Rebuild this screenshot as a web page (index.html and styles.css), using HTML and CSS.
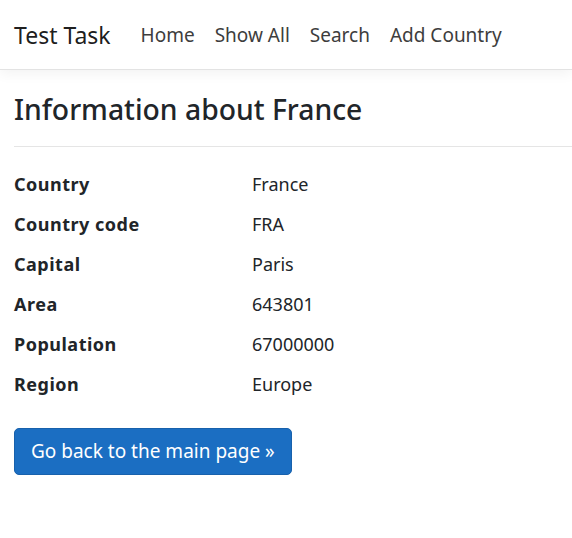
FILE: index.html
```html
<!DOCTYPE html>
<html lang="en">
<head>
<meta charset="utf-8">
<title>Information about France</title>
<link rel="stylesheet" href="styles.css">
</head>
<body>
<header class="navbar">
  <a class="brand" href="#">Test Task</a>
  <nav class="nav">
    <a class="nav-link" href="#">Home</a>
    <a class="nav-link" href="#">Show All</a>
    <a class="nav-link" href="#">Search</a>
    <a class="nav-link" href="#">Add Country</a>
  </nav>
</header>
<main class="content">
  <h2 class="title">Information about France</h2>
  <hr class="divider">
  <dl class="details">
    <dt>Country</dt><dd>France</dd>
    <dt>Country code</dt><dd>FRA</dd>
    <dt>Capital</dt><dd>Paris</dd>
    <dt>Area</dt><dd>643801</dd>
    <dt>Population</dt><dd>67000000</dd>
    <dt>Region</dt><dd>Europe</dd>
  </dl>
  <a class="btn" href="#">Go back to the main page &raquo;</a>
</main>
</body>
</html>
```

FILE: styles.css
```css
html, body {
  margin: 0;
  padding: 0;
  background: #fff;
}
body {
  font-family: "Noto Sans", "Open Sans", sans-serif;
  color: #212529;
  font-size: 18px;
}
a { text-decoration: none; }

.navbar {
  height: 70px;
  box-sizing: border-box;
  display: flex;
  align-items: center;
  padding: 1px 14px 0;
  border-bottom: 1px solid #e3e3e3;
  box-shadow: 0 4px 12px rgba(0, 0, 0, 0.05);
}
.brand {
  font-size: 23px;
  color: rgba(0, 0, 0, 0.9);
  margin-right: 20px;
}
.nav {
  display: flex;
}
.nav-link {
  color: #3d3d3d;
  font-size: 19px;
  padding: 0 10px;
}

.content {
  padding: 0 14px;
}
.title {
  font-size: 28.3px;
  font-weight: 500;
  line-height: 34px;
  margin: 22px 0 0;
}
.divider {
  border: 0;
  border-top: 1px solid #e5e5e5;
  margin: 20px -14px 17px 0;
}
.details {
  display: grid;
  grid-template-columns: 238px 1fr;
  margin: 0;
  line-height: 40px;
}
.details dt {
  font-weight: 700;
  letter-spacing: 0.5px;
}
.details dd { margin: 0; }

.btn {
  display: inline-block;
  margin-top: 24px;
  background: #1b6ec2;
  border: 1px solid #1861ac;
  color: #fff;
  font-size: 19px;
  line-height: 29px;
  padding: 8px 16px;
  border-radius: 5px;
}
```
